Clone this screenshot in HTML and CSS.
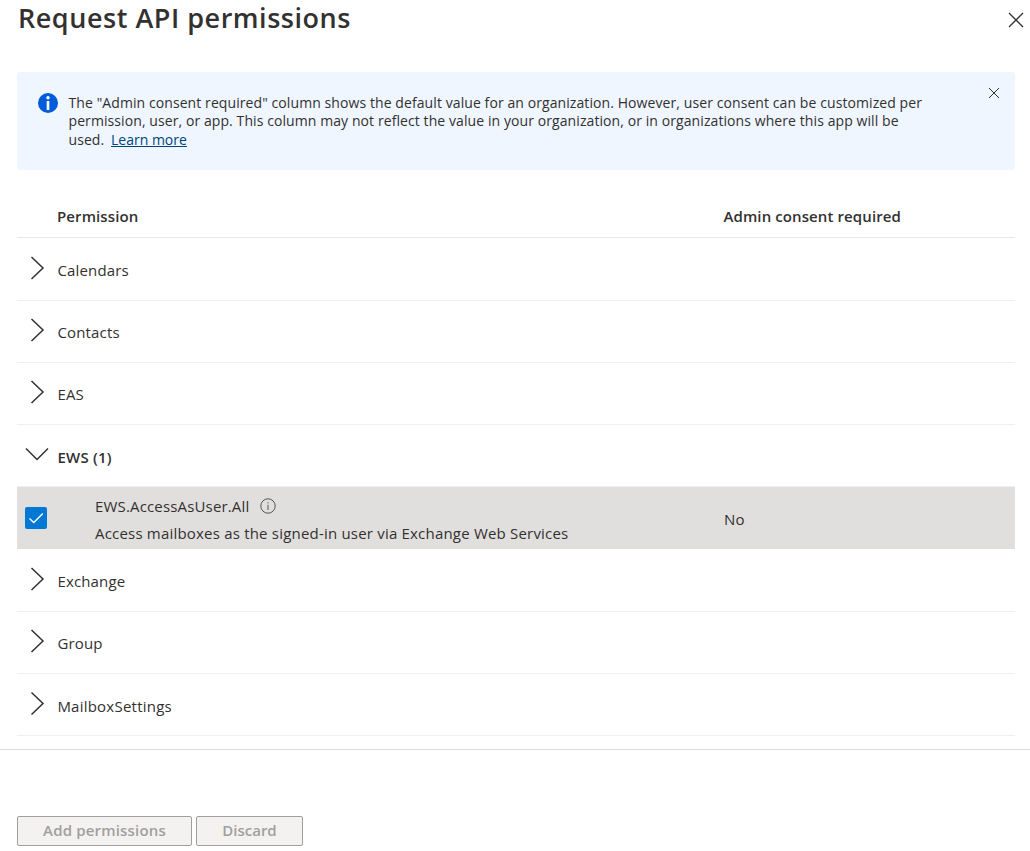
FILE: index.html
```html
<!DOCTYPE html>
<html lang="en">
<head>
<meta charset="utf-8">
<title>Request API permissions</title>
<link rel="stylesheet" href="styles.css">
</head>
<body>
<main class="panel">
  <header class="panel-header">
    <h1 class="title">Request API permissions</h1>
    <svg class="close" viewBox="0 0 16 16"><path d="M1 1L15 15M15 1L1 15"/></svg>
  </header>
  <section class="notice">
    <svg class="notice-icon" viewBox="0 0 20 20"><circle cx="10" cy="10" r="10"/><rect x="8.7" y="8" width="2.6" height="9"/><circle class="dot" cx="10" cy="4.8" r="1.7"/></svg>
    <p class="notice-text">The "Admin consent required" column shows the default value for an organization. However, user consent can be customized per<br>permission, user, or app. This column may not reflect the value in your organization, or in organizations where this app will be<br>used. <a class="learn">Learn more</a></p>
    <svg class="notice-close" viewBox="0 0 12 12"><path d="M1 1L11 11M11 1L1 11"/></svg>
  </section>
  <section class="table">
    <div class="table-head"><span>Permission</span><span>Admin consent required</span></div>
    <div class="row tall"><svg class="chevron" viewBox="0 0 24 24"><path d="M6.5 1L18 12L6.5 23"/></svg><span class="name">Calendars</span></div>
    <div class="row"><svg class="chevron" viewBox="0 0 24 24"><path d="M6.5 1L18 12L6.5 23"/></svg><span class="name">Contacts</span></div>
    <div class="row"><svg class="chevron" viewBox="0 0 24 24"><path d="M6.5 1L18 12L6.5 23"/></svg><span class="name">EAS</span></div>
    <div class="row"><svg class="chevron" viewBox="0 0 24 24"><path d="M1 6.5L12 17.5L23 6.5"/></svg><span class="name low open">EWS (1)</span></div>
    <div class="row selected">
      <svg class="checkbox" viewBox="0 0 22 22"><rect width="22" height="22" rx="2"/><path d="M4.5 11.5L8.8 15.5L17.8 6.5"/></svg>
      <div class="detail">
        <div class="scope"><span>EWS.AccessAsUser.All</span><svg class="info" viewBox="0 0 16 16"><circle cx="8" cy="8" r="7.2"/><path d="M8 6.8V12M8 4.2V5.4"/></svg></div>
        <div class="description">Access mailboxes as the signed-in user via Exchange Web Services</div>
      </div>
      <span class="consent">No</span>
    </div>
    <div class="row tall"><svg class="chevron" viewBox="0 0 24 24"><path d="M6.5 1L18 12L6.5 23"/></svg><span class="name">Exchange</span></div>
    <div class="row"><svg class="chevron" viewBox="0 0 24 24"><path d="M6.5 1L18 12L6.5 23"/></svg><span class="name">Group</span></div>
    <div class="row"><svg class="chevron" viewBox="0 0 24 24"><path d="M6.5 1.5L18 12.5L6.5 23.5"/></svg><span class="name low">MailboxSettings</span></div>
  </section>
  <footer class="actions"><button class="button add" disabled>Add permissions</button><button class="button discard" disabled>Discard</button></footer>
</main>
</body>
</html>
```
FILE: styles.css
```css
* { box-sizing: border-box; }
body { margin: 0; background: #fff; color: #323130; font-family: "Open Sans", "Noto Sans", sans-serif; font-size: 15px; }
.panel { display: flex; flex-direction: column; width: 1030px; height: 851px; overflow: hidden; }
svg { display: block; flex: none; fill: none; stroke: #323130; }
.panel-header { display: flex; justify-content: space-between; height: 72px; padding: 0 6px 0 18px; }
.title { margin: 0; font-size: 27px; line-height: 36px; font-weight: 600; letter-spacing: 0.53px; white-space: nowrap; }
.close { width: 16px; height: 16px; margin-top: 11.5px; stroke-width: 1.3; }
.notice { display: flex; height: 98px; margin: 0 15px 0 17px; padding: 21px 15px 0 21px; background: #eff6ff; border-radius: 3px; }
.notice-icon { width: 20px; height: 20px; fill: #015cda; stroke: none; }
.notice-icon rect, .notice-icon .dot { fill: #fff; }
.notice-text { flex: 1; margin: 0.6px 0 0 10.5px; font-size: 14px; line-height: 18.5px; letter-spacing: 0.085px; white-space: nowrap; }
.learn { margin-left: 3px; color: #004578; letter-spacing: 0; text-decoration: underline; }
.notice-close { width: 12px; height: 12px; margin-top: -6px; stroke-width: 1; }
.table { margin: 0 15px 0 17px; }
.table-head { display: grid; grid-template-columns: 666.5px auto; justify-content: start; height: 68px; padding: 36px 0 0 40px; line-height: 20px; font-weight: 600; letter-spacing: 0.1px; border-bottom: 1px solid #e8e7e6; }
.row { display: flex; height: 62px; border-bottom: 1px solid #f1f0ef; letter-spacing: 0.16px; white-space: nowrap; }
.tall { height: 63px; padding-top: 1px; }
.chevron { width: 24px; height: 24px; margin: 17px 0 0 8px; stroke-width: 1.5; }
.name { margin: 21px 0 0 8.4px; line-height: 20px; letter-spacing: 0.16px; }
.low { margin-top: 22px; letter-spacing: 0.23px; }
.open { font-weight: 600; }
.selected { background: #e1dfdd; border-bottom: 0; }
.checkbox { width: 22px; height: 22px; margin: 20px 0 0 8px; fill: #0078d4; stroke: none; }
.checkbox path { fill: none; stroke: #fff; stroke-width: 1.3; }
.detail { width: 629px; margin: 6px 0 0 48px; line-height: 27px; }
.scope { display: flex; gap: 11px; }
.info { width: 16px; height: 16px; margin-top: 5px; stroke: #55534f; stroke-width: 1; }
.description { letter-spacing: 0.2px; }
.consent { margin-top: 22px; line-height: 20px; }
.actions { display: flex; gap: 4px; margin-top: 13px; padding: 66px 17px 0; border-top: 1px solid #dcdcdc; }
.button { height: 30px; padding: 0 0 2px; border: 1px solid #a19f9d; border-radius: 2px; background: #f3f2f1; color: #a19f9d; font: 600 15px/20px "Open Sans", sans-serif; }
.add { width: 175px; letter-spacing: 0.17px; }
.discard { width: 107px; }
```
